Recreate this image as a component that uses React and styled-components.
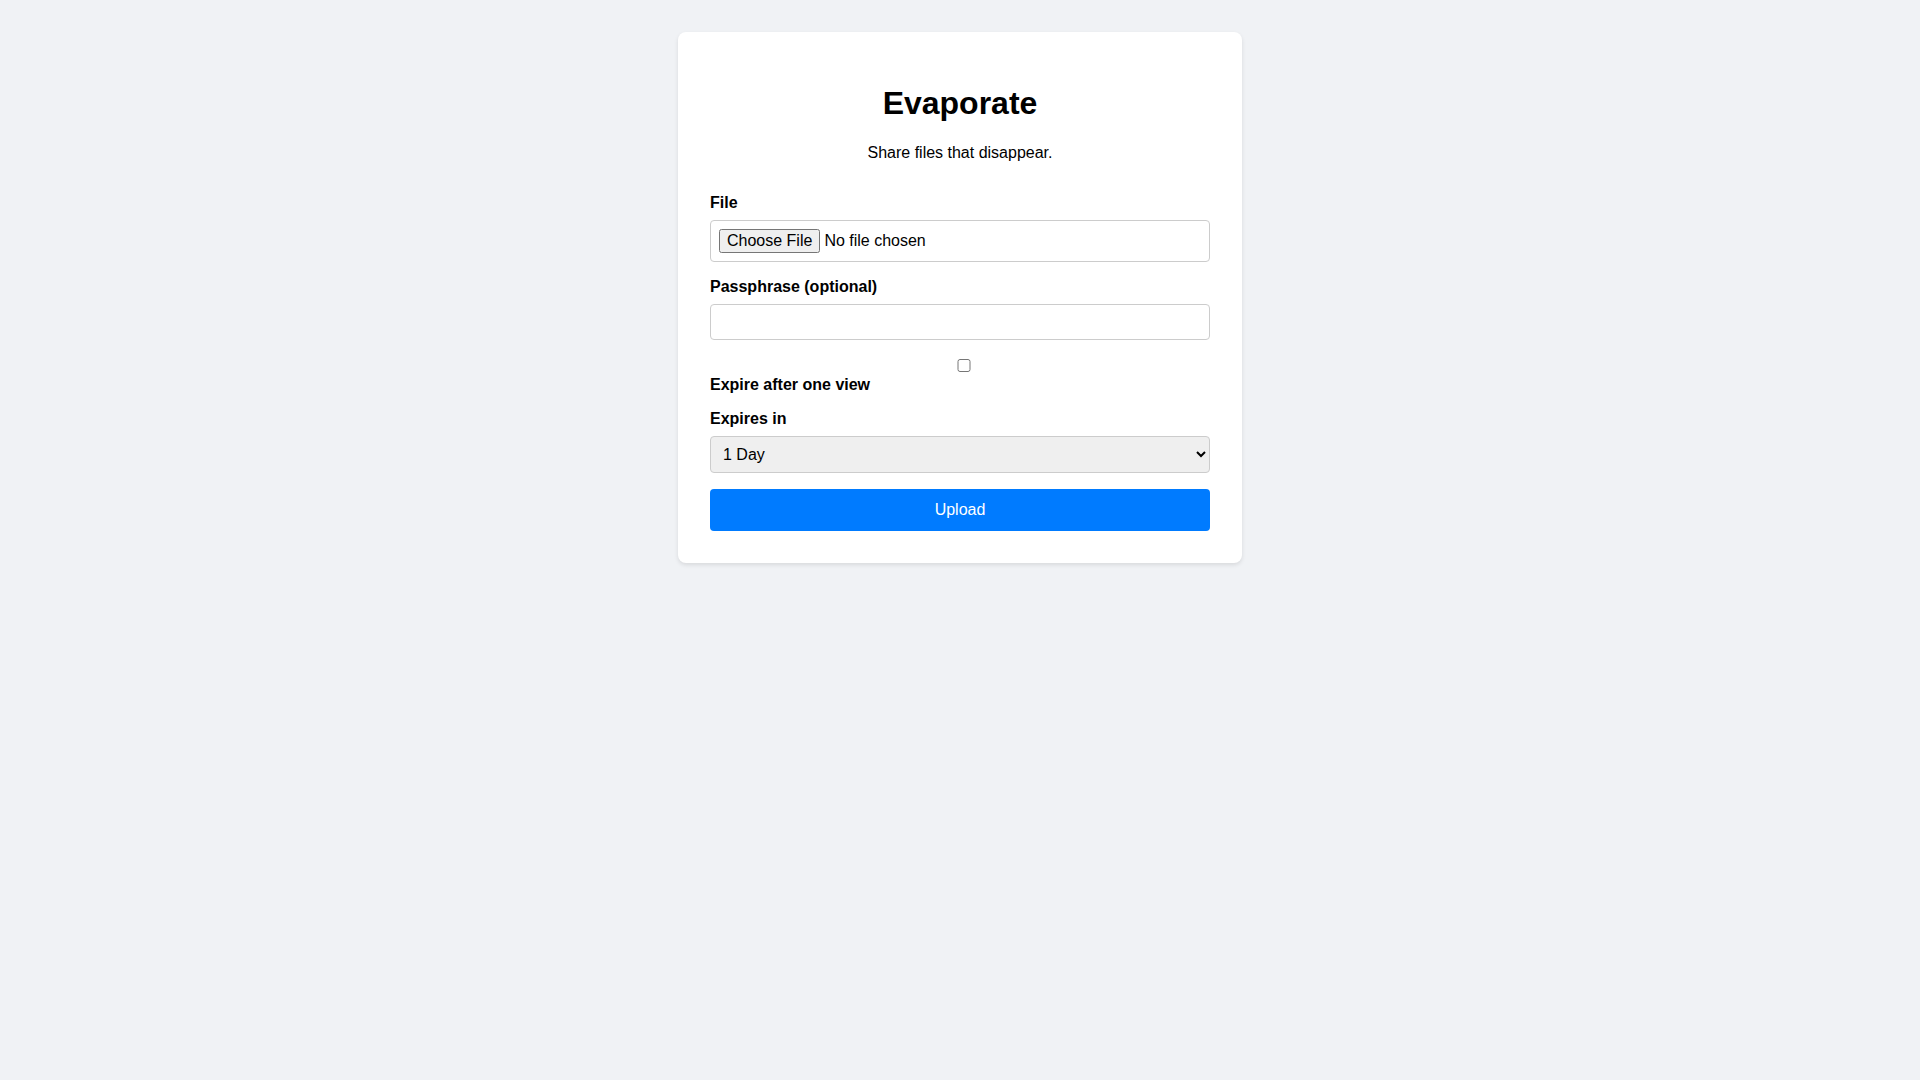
import { useState } from 'react';
import styled, { createGlobalStyle } from 'styled-components';

const GlobalStyle = createGlobalStyle`
  body {
    margin: 0;
    padding: 32px 0;
    background: #f0f2f5;
    font-family: Arial, "Liberation Sans", sans-serif;
    color: #000;
  }
`;

const Card = styled.div`
  box-sizing: border-box;
  width: 564px;
  margin: 0 auto;
  padding: 32px;
  background: #fff;
  border-radius: 8px;
  box-shadow: 0 2px 4px rgba(0, 0, 0, 0.1);
`;

const Title = styled.h1`
  font-size: 32px;
  margin: 21.44px 0;
  text-align: center;
`;

const Subtitle = styled.p`
  margin: 16px 0 32px;
  text-align: center;
`;

const Group = styled.div`
  margin-bottom: 16px;
`;

const Label = styled.label`
  display: block;
  font-weight: bold;
  margin-bottom: 8px;
`;

const Field = styled.input`
  display: block;
  box-sizing: border-box;
  width: 100%;
  padding: 8px;
  border: 1px solid #ccc;
  border-radius: 4px;
  font-family: inherit;
  font-size: 16px;
  background: #fff;
`;

// sits inline on its own line, stretched across the row like the other fields
const Check = styled.input`
  box-sizing: border-box;
  width: 100%;
  height: 13px;
  margin: 3px 3px 3px 4px;
  padding: 0;
`;

const Select = styled.select`
  display: block;
  box-sizing: border-box;
  width: 100%;
  padding: 8px;
  border: 1px solid #ccc;
  border-radius: 4px;
  font-family: inherit;
  font-size: 16px;
  background: #efefef;
  color: #000;
`;

const UploadButton = styled.button`
  display: block;
  box-sizing: border-box;
  width: 100%;
  padding: 12px;
  border: none;
  border-radius: 4px;
  background: #007bff;
  color: #fff;
  font-family: inherit;
  font-size: 16px;
  cursor: pointer;
`;

export default function App() {
  const [expires, setExpires] = useState('1d');

  return (
    <>
      <GlobalStyle />
      <Card>
        <Title>Evaporate</Title>
        <Subtitle>Share files that disappear.</Subtitle>
        <form onSubmit={(e) => e.preventDefault()}>
          <Group>
            <Label htmlFor="file">File</Label>
            <Field id="file" type="file" />
          </Group>
          <Group>
            <Label htmlFor="pass">Passphrase (optional)</Label>
            <Field id="pass" type="password" />
          </Group>
          <Group>
            <Check id="once" type="checkbox" />
            <Label htmlFor="once">Expire after one view</Label>
          </Group>
          <Group>
            <Label htmlFor="expires">Expires in</Label>
            <Select id="expires" value={expires} onChange={(e) => setExpires(e.target.value)}>
              <option value="1h">1 Hour</option>
              <option value="1d">1 Day</option>
              <option value="7d">7 Days</option>
            </Select>
          </Group>
          <UploadButton type="submit">Upload</UploadButton>
        </form>
      </Card>
    </>
  );
}
